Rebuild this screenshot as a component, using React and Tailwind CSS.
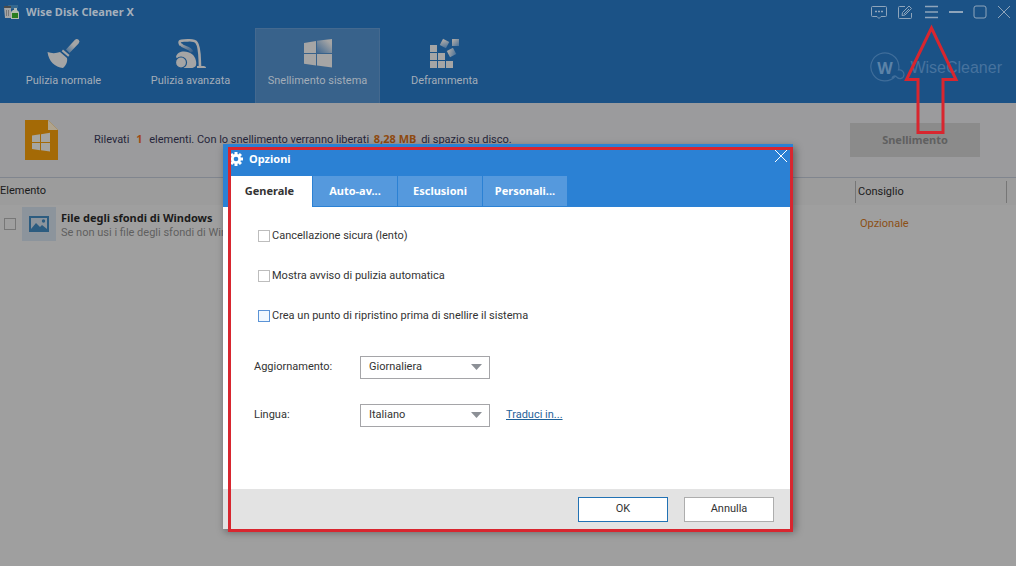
import { useState } from 'react';

const NAV_ITEMS = [
    { id: 'normale', label: 'Pulizia normale', Icon: BroomIcon },
    { id: 'avanzata', label: 'Pulizia avanzata', Icon: VacuumIcon },
    { id: 'sistema', label: 'Snellimento sistema', Icon: WindowsIcon },
    { id: 'deframmenta', label: 'Deframmenta', Icon: DefragIcon },
];

const TABS = ['Generale', 'Auto-av...', 'Esclusioni', 'Personali...'];

const OPTIONS = [
    { id: 'sicura', label: 'Cancellazione sicura (lento)' },
    { id: 'avviso', label: 'Mostra avviso di pulizia automatica' },
    { id: 'ripristino', label: 'Crea un punto di ripristino prima di snellire il sistema', focused: true },
];

const BOLD = "font-['Noto_Sans',sans-serif] font-bold";

// --- Icone ---

function AppIcon() {
    return (
        <svg width="16" height="16" viewBox="0 0 16 16">
            <path d="M4 1h10v3l-3 1H5z" fill="#35688f" />
            <path d="M0 3h7v11H1z" fill="#a5a5a5" />
            <path d="M0 2h7v2H0z" fill="#4b4b4b" />
            <path d="M2.500 6v6M4.500 6v6" stroke="#777" strokeWidth="1" />
            <path d="M10 4h3v3h-3z" fill="#b5bcb5" />
            <path d="M7 8l2-2h4l2 2v7H7z" fill="#b3bdb0" />
            <path d="M8 9h6v5H8z" fill="#2a7d1f" />
        </svg>
    );
}

function BroomIcon() {
    return (
        <svg width="34" height="32" viewBox="0 0 34 32">
            <defs>
                <linearGradient id="manico" x1="1" y1="0" x2="0" y2="1">
                    <stop offset="0.45" stopColor="#a5a5a5" />
                    <stop offset="1" stopColor="#3f6993" />
                </linearGradient>
            </defs>
            <path d="M28 2.800a2.500 2.500 0 0 1 3.600 3.600L22.500 16 19 12.500z" fill="url(#manico)" />
            <path d="M16 12.500l6.500 5.500-1.300 1.700-6.500-5.500z" fill="#a5a5a5" />
            <path d="M13 15l7 6c.8 4-1 7.500-4 10C8 30.500 1.500 24 .5 15c4 1.500 8.500 1.500 12.500 0z" fill="#a5a5a5" />
        </svg>
    );
}

function VacuumIcon() {
    return (
        <svg width="32" height="32" viewBox="0 0 32 32">
            <defs>
                <linearGradient id="tubo" x1="0" y1="0" x2="1" y2="1">
                    <stop offset="0" stopColor="#a5a5a5" />
                    <stop offset="1" stopColor="#355f8b" />
                </linearGradient>
            </defs>
            <path d="M5.500 7c2.500 4 9 3 11.500 8" fill="none" stroke="url(#tubo)" strokeWidth="3" />
            <path d="M5.500 8C3 3.500 6 3.500 9 3.500c5 0 10-1.500 12.500 2C25 10 24.500 19 25 29" fill="none" stroke="#a5a5a5" strokeWidth="2.600" />
            <path d="M22 29h5c3 0 4 .5 4 2h-9z" fill="#a5a5a5" />
            <path d="M1 20c1-4 4-5.500 8-5.500 6 0 11 3.500 12 9.500 1 5-1 7-5 7H9z" fill="#a5a5a5" />
            <circle cx="6" cy="25.500" r="5.500" fill="#a5a5a5" stroke="#1b5286" strokeWidth="1.200" />
        </svg>
    );
}

function WindowsIcon() {
    return (
        <svg width="28" height="29" viewBox="0 0 28 29">
            <defs>
                <linearGradient id="vetro" x1="1" y1="0" x2="0" y2="1">
                    <stop offset="0.2" stopColor="#a5a5a5" />
                    <stop offset="1" stopColor="#3f6790" />
                </linearGradient>
            </defs>
            <path d="M0 4l12-2v12H0z" fill="#a5a5a5" />
            <path d="M13 1.800L28 0v14H13z" fill="url(#vetro)" />
            <path d="M0 15h12v11.500L0 24.800zM13 15h15v13.500L13 26.600z" fill="#a5a5a5" />
        </svg>
    );
}

function DefragIcon() {
    return (
        <svg width="30" height="30" viewBox="0 0 30 30">
            <defs>
                <linearGradient id="blocco" x1="0" y1="0" x2="1" y2="1">
                    <stop offset="0.2" stopColor="#a5a5a5" />
                    <stop offset="1" stopColor="#4a7198" />
                </linearGradient>
            </defs>
            <path d="M0 7h7v7H0zM0 15h7v7H0zM8 15h7v7H8zM0 23h7v7H0zM8 23h7v7H8zM16 23h7v7h-7z" fill="#a5a5a5" />
            <rect x="11" y="2" width="7" height="7" transform="rotate(28 14.500 5.500)" fill="url(#blocco)" />
            <rect x="18" y="11" width="7" height="7" transform="rotate(-28 21.500 14.500)" fill="url(#blocco)" />
            <rect x="22" y="1" width="7" height="7" fill="url(#blocco)" />
        </svg>
    );
}

function LogoIcon() {
    return (
        <svg width="36" height="32" viewBox="0 0 36 32">
            <path
                d="M25.500 24A14 14 0 1 1 28.800 13.500c.2 1.700.2 3-.3 4.500 3-.5 5.500 1.500 5.500 4.500-.3 4-4.500 6-8.500 1.500-2-.5-3 .5-3.500 2"
                fill="none"
                stroke="#3f6d9a"
                strokeWidth="1.200"
            />
            <text x="15" y="21.500" textAnchor="middle" fontSize="16" fontWeight="bold" fontFamily="Open Sans, sans-serif" fill="#5c83a8">
                W
            </text>
        </svg>
    );
}

function DocumentIcon() {
    return (
        <svg width="33" height="40" viewBox="0 0 33 40">
            <path d="M0 0h23l10 10v30H0z" fill="#a46a06" />
            <path d="M23 0l10 10H23z" fill="#b0a48e" />
            <path d="M7 15.500l8-1.200V22H7zM16 14.200l9-1.400V22h-9zM7 23h8v7.200L7 29zM16 23h9v8.500l-9-1.300z" fill="#a5a5a0" />
        </svg>
    );
}

function PictureIcon() {
    return (
        <svg width="20" height="16" viewBox="0 0 20 16">
            <rect x="1" y="1" width="18" height="14" fill="none" stroke="#2c5c80" strokeWidth="2" />
            <path d="M2 13l5-6 4 4 2-2 5 4v1H2z" fill="#2c5c80" />
            <circle cx="14.500" cy="5" r="1.700" fill="#2c5c80" />
        </svg>
    );
}

function GearIcon() {
    return (
        <svg width="14" height="14" viewBox="-7 -7 14 14" fill="#fff">
            {[0, 45, 90, 135].map((angle) => (
                <rect key={angle} x="-1.500" y="-7" width="3" height="14" transform={`rotate(${angle})`} />
            ))}
            <circle r="5" />
            <circle r="2.300" fill="#2b81d4" />
        </svg>
    );
}

// --- Barra superiore ---

function WindowButton({ label, wide, children }) {
    return (
        <button type="button" aria-label={label} className={`flex h-6 items-center justify-center ${wide ? 'w-[26px]' : 'w-6'}`}>
            <svg width="16" height="16" viewBox="0 0 16 16" fill="none" stroke="#8fa5bb">
                {children}
            </svg>
        </button>
    );
}

function Header() {
    return (
        <header className="bg-[#1b5286] text-[#a3adb8]">
            <div className="flex h-7 items-start justify-between">
                <div className="flex h-6 items-center gap-1.5 pl-1">
                    <AppIcon />
                    <h1 className={`${BOLD} text-[11px] text-[#a5b0bc]`}>Wise Disk Cleaner X</h1>
                </div>
                <div className="flex">
                    <WindowButton label="Messaggi" wide>
                        <path d="M1.500 2.500h13a1 1 0 0 1 1 1v8a1 1 0 0 1-1 1H10l-2 2-2-2H1.500a1 1 0 0 1-1-1v-8a1 1 0 0 1 1-1z" />
                        <path d="M4 7.500h2M7 7.500h2M10 7.500h2" strokeWidth="1.500" />
                    </WindowButton>
                    <WindowButton label="Modifica" wide>
                        <path d="M8 2.500H2.500a1 1 0 0 0-1 1v10a1 1 0 0 0 1 1h11a1 1 0 0 0 1-1V9" />
                        <path d="M5 11.500l.5-3L12 2l2.500 2.500L8 11zM7 10l5-5" />
                    </WindowButton>
                    <WindowButton label="Menu" wide>
                        <path d="M2 2.500h13M2 8h13M2 13.500h13" strokeWidth="1.500" />
                    </WindowButton>
                    <WindowButton label="Riduci a icona">
                        <path d="M1 8h14" strokeWidth="2" />
                    </WindowButton>
                    <WindowButton label="Ingrandisci">
                        <rect x="2" y="2" width="12" height="12" rx="2" />
                    </WindowButton>
                    <WindowButton label="Chiudi">
                        <path d="M2 2l12 12M14 2L2 14" />
                    </WindowButton>
                </div>
            </div>
            <div className="flex items-start justify-between">
                <nav className="flex gap-0.5 pl-px">
                    {NAV_ITEMS.map(({ id, label, Icon }) => (
                        <button
                            key={id}
                            type="button"
                            className={`flex h-[75px] w-[125px] flex-col items-center border pt-2
                                ${id === 'sistema' ? 'border-b-0 border-[#44698f] bg-[#38628b]' : 'border-transparent'}
                            `}
                        >
                            <span className="flex h-8 items-center">
                                <Icon />
                            </span>
                            <span className="mt-1 text-[11px] leading-4">{label}</span>
                        </button>
                    ))}
                </nav>
                <div className="flex items-center gap-1 pt-6 pr-3.5 text-[#47739e]">
                    <LogoIcon />
                    <span className="font-['Liberation_Sans',sans-serif] text-base leading-8">WiseCleaner</span>
                </div>
            </div>
        </header>
    );
}

// --- Contenuto principale ---

function Summary() {
    return (
        <section className="flex h-[75px] items-center border-b border-[#80858e] bg-[#9b9b9d] pr-9 pl-[25px]">
            <DocumentIcon />
            <p className="ml-9 flex-1 text-[11px] text-[#26263a]">
                Rilevati <b className={`${BOLD} mx-1 text-[#a04a16]`}>1</b> elementi. Con lo snellimento verranno liberati{' '}
                <b className={`${BOLD} mx-0.5 text-[#8f4a10]`}>8,28 MB</b> di spazio su disco.
            </p>
            <button type="button" className={`${BOLD} h-[34px] w-[130px] bg-[#8b8b8b] text-[11px] text-[#606060]`}>
                Snellimento
            </button>
        </section>
    );
}

function ItemsTable() {
    return (
        <table className="w-full table-fixed text-left text-[11px] text-[#1b1b1b]">
            <thead>
                <tr className="h-[27px] bg-[#9c9c9c]">
                    <th className="p-0 font-normal">Elemento</th>
                    <th className="w-[161px] p-0 pr-[9px] font-normal">
                        <div className="border-x border-[#767676] pl-0.5 leading-[22px]">Consiglio</div>
                    </th>
                </tr>
            </thead>
            <tbody>
                <tr>
                    <td className="p-0">
                        <label className="flex h-[38px] items-center pl-1">
                            <input type="checkbox" className="size-3 appearance-none border border-[#777]" />
                            <span className="ml-1.5 flex size-[34px] items-center justify-center bg-[#8c949c]">
                                <PictureIcon />
                            </span>
                            <span className="ml-[5px] pt-0.5 whitespace-nowrap">
                                <b className={`${BOLD} block leading-[15px]`}>File degli sfondi di Windows</b>
                                <span className="block leading-[15px] text-[#5f5f5f]">Se non usi i file degli sfondi di Windows</span>
                            </span>
                        </label>
                    </td>
                    <td className="p-0 pl-[5px] text-[#8c4f14]">Opzionale</td>
                </tr>
            </tbody>
        </table>
    );
}

// --- Finestra Opzioni ---

function SelectField({ id, label, value, children }) {
    return (
        <div className="flex h-6 items-center pl-[31px]">
            <label htmlFor={id} className="w-[106px]">{label}</label>
            <div className="relative">
                <select id={id} defaultValue={value} className="block h-[23px] w-[130px] appearance-none border border-[#a5a5a8] bg-white pl-2">
                    <option>{value}</option>
                </select>
                <svg className="pointer-events-none absolute top-2 right-2" width="11" height="6" viewBox="0 0 11 6">
                    <path d="M0 0h11L5.500 6z" fill="#8c9096" />
                </svg>
            </div>
            {children}
        </div>
    );
}

function OptionsDialog() {
    const [activeTab, setActiveTab] = useState('Generale');

    return (
        <div role="dialog" aria-label="Opzioni" className="relative w-[570px] bg-white text-[11px] text-[#333] shadow-[2px_3px_8px_rgba(0,0,0,0.4)]">
            <div className="bg-[#2b81d4] text-white">
                <div className="flex h-8 items-start justify-between pt-1.5 pr-1.5 pl-1.5">
                    <h2 className={`${BOLD} flex h-[18px] items-center gap-1.5`}>
                        <GearIcon />
                        Opzioni
                    </h2>
                    <button type="button" aria-label="Chiudi opzioni">
                        <svg width="12" height="12" viewBox="0 0 12 12" stroke="#fff">
                            <path d="M0 0l12 12M12 0L0 12" />
                        </svg>
                    </button>
                </div>
                <div role="tablist" className="flex gap-px pl-2">
                    {TABS.map((tab) => (
                        <button
                            key={tab}
                            type="button"
                            role="tab"
                            aria-selected={tab === activeTab}
                            onClick={() => setActiveTab(tab)}
                            className={`${BOLD}
                                ${tab === activeTab ? 'h-[31px] w-[81px] bg-white pr-1 text-[#333]' : 'h-[30px] w-[84px] bg-[#5599dd]'}
                            `}
                        >
                            {tab}
                        </button>
                    ))}
                </div>
            </div>

            <div className="flex h-[282px] flex-col pt-[17px]">
                {OPTIONS.map((option) => (
                    <label key={option.id} className="mb-4 flex h-6 items-center gap-0.5 pl-[35px]">
                        <input
                            type="checkbox"
                            className={`size-3 appearance-none border ${option.focused ? 'border-[#5b93d6] bg-[#f0f8ff]' : 'border-[#bdbdbd] bg-white'}`}
                        />
                        {option.label}
                    </label>
                ))}
                <div className="mt-[11px] flex flex-col gap-6">
                    <SelectField id="aggiornamento" label="Aggiornamento:" value="Giornaliera" />
                    <SelectField id="lingua" label="Lingua:" value="Italiano">
                        <a href="#traduci" className="ml-4 text-[#1f6299] underline">Traduci in...</a>
                    </SelectField>
                </div>
            </div>

            <div className="flex h-10 items-center justify-end gap-4 bg-[#e3e3e3] pr-[19px]">
                <button type="button" className="h-[25px] w-[90px] border border-[#2272b4] bg-white">OK</button>
                <button type="button" className="h-[25px] w-[90px] border border-[#adadad] bg-white">Annulla</button>
            </div>

            {/* Riquadro che evidenzia la finestra */}
            <div className="pointer-events-none absolute top-[3px] right-0 -bottom-[3px] left-[5px] border-3 border-[#d8262f]" />
        </div>
    );
}

export default function App() {
    return (
        <div className="relative min-h-screen bg-[#9f9f9f] font-['Roboto','DejaVu_Sans',sans-serif]">
            <Header />
            <main>
                <Summary />
                <ItemsTable />
            </main>

            <div className="absolute inset-x-0 top-36 flex justify-center">
                <OptionsDialog />
            </div>

            {/* Freccia verso il pulsante del menu */}
            <svg className="pointer-events-none absolute top-6 right-[57px]" width="56" height="112" viewBox="0 0 56 112" fill="none">
                <path d="M28.500 4L3.500 55.500h11.500v53h25v-53h13z" stroke="#d8262f" strokeWidth="3" />
            </svg>
        </div>
    );
}
